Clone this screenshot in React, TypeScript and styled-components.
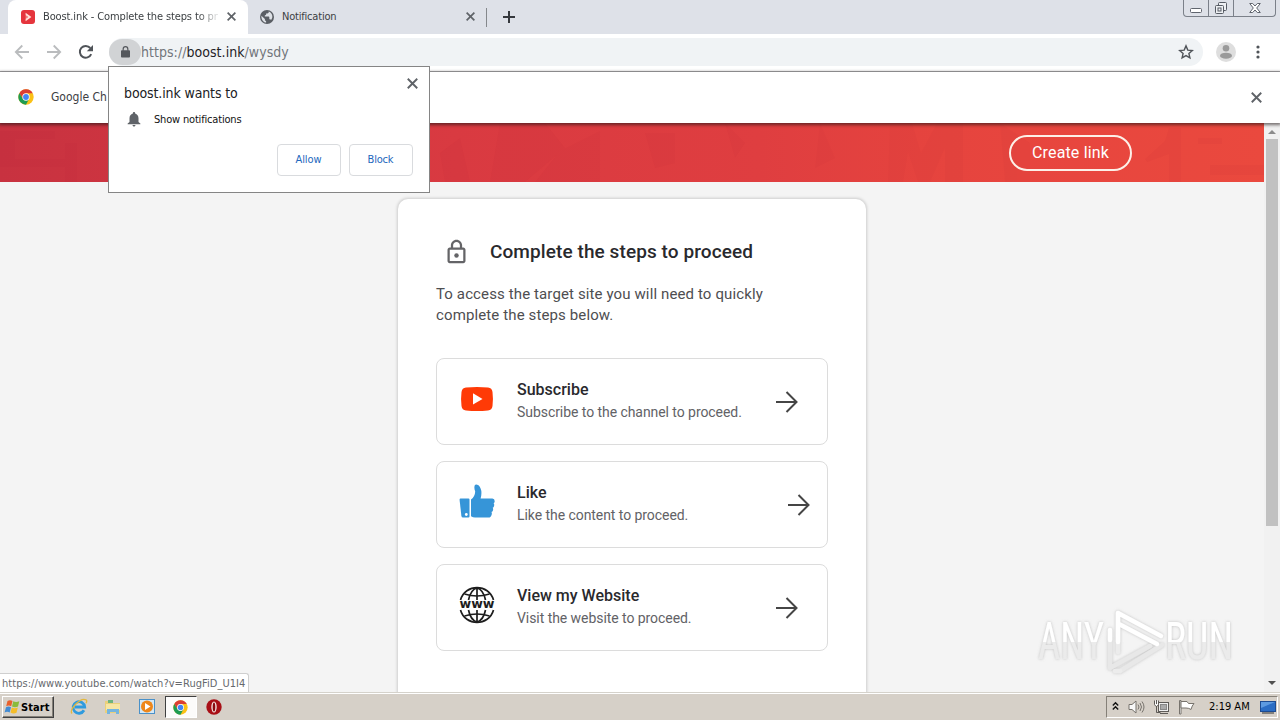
import styled, { createGlobalStyle } from "styled-components";

// fonts
const UI_FONT = `"DejaVu Sans Condensed", "DejaVu Sans", Tahoma, sans-serif`;
const PAGE_FONT = `Roboto, "Liberation Sans", sans-serif`;

type Step = {
  icon: "youtube" | "like" | "www";
  title: string;
  text: string;
  arrowGap: number;
};

const STEPS: Step[] = [
  { icon: "youtube", title: "Subscribe", text: "Subscribe to the channel to proceed.", arrowGap: 28 },
  { icon: "like", title: "Like", text: "Like the content to proceed.", arrowGap: 16 },
  { icon: "www", title: "View my Website", text: "Visit the website to proceed.", arrowGap: 28 },
];

const GlobalStyle = createGlobalStyle`
  * {
    box-sizing: border-box;
  }

  body {
    margin: 0;
    overflow: hidden;
  }

  h1, h2, p {
    margin: 0;
  }

  svg {
    display: block;
    flex: none;
  }

  button {
    padding: 0;
    border: 0;
    background: none;
    font: inherit;
  }
`;

// BROWSER
const Screen = styled.div`
  position: relative;
  display: flex;
  flex-direction: column;
  width: 1280px;
  height: 720px;
  overflow: hidden;
  background: #fff;
  font-family: ${UI_FONT};
  font-stretch: condensed;
`;

const Label = styled.span<{ $size?: number; $color?: string; $spacing?: number }>`
  font-size: ${(p) => p.$size ?? 11}px;
  color: ${(p) => p.$color ?? "#3c4043"};
  letter-spacing: ${(p) => p.$spacing ?? 0}px;
  line-height: 16px;
  white-space: nowrap;
`;

const TabStrip = styled.div`
  display: flex;
  height: 34px;
  padding-left: 8px;
  background: #dee1e8;
`;

const Tab = styled.div<{ $active?: boolean }>`
  display: flex;
  align-items: center;
  width: ${(p) => (p.$active ? 240 : 239)}px;
  height: 34px;
  padding: 0 12px 1px ${(p) => (p.$active ? 13 : 12)}px;
  gap: 8px;
  border-radius: 8px 8px 0 0;
  background: ${(p) => (p.$active ? "#fff" : "transparent")};
`;

const TabTitle = styled(Label)<{ $fade?: boolean }>`
  flex: 1;
  padding-top: 1px;
  ${(p) => p.$fade && "mask-image: linear-gradient(90deg, #000 88%, rgba(0, 0, 0, 0.2) 98%);"}
`;

const TabDivider = styled.div`
  width: 1px;
  height: 19px;
  margin: 8px 16px 0 -1px;
  background: #85888c;
`;

const NewTab = styled.div`
  display: flex;
  align-items: center;
  height: 34px;
`;

const WindowControls = styled.div`
  display: flex;
  height: 17px;
  margin: 0 4px 0 auto;
  border: 1px solid #7b8089;
  border-top: 0;
  border-radius: 0 0 4px 4px;
`;

const WindowButton = styled.div<{ $width: number }>`
  display: flex;
  align-items: center;
  justify-content: center;
  width: ${(p) => p.$width}px;

  & + & {
    border-left: 1px solid #7b8089;
  }
`;

const Toolbar = styled.div`
  display: flex;
  align-items: center;
  height: 38px;
  padding: 0 14px 1px;
  border-bottom: 1px solid #acaeb0;
  background: #fff;
`;

const NavButtons = styled.div`
  display: flex;
  gap: 16px;
  margin-right: 15px;
`;

const Omnibox = styled.div`
  display: flex;
  align-items: center;
  width: 1094px;
  height: 28px;
  padding-right: 9px;
  border-radius: 14px;
  background: #f0f3f5;
`;

const SiteChip = styled.div`
  display: flex;
  align-items: center;
  justify-content: center;
  width: 32px;
  height: 26px;
  padding-left: 1px;
  border-radius: 13px;
  background: #d1d3d5;
`;

const Url = styled(Label)`
  flex: 1;
  line-height: 20px;

  b {
    font-weight: 400;
    color: #1f2226;
  }
`;

const ToolbarEnd = styled.div`
  display: flex;
  align-items: center;
  gap: 20px;
  margin-left: 13px;
`;

const Infobar = styled.div`
  position: relative;
  z-index: 1;
  display: flex;
  align-items: center;
  height: 51px;
  padding: 0 18px 1px 18px;
  gap: 17px;
  background: #fff;
  box-shadow: 0 1px 3px 1px rgba(30, 20, 20, 0.6);
`;

const InfobarClose = styled.div`
  margin-left: auto;
`;

// PERMISSION POPUP
const Popup = styled.div`
  position: absolute;
  z-index: 3;
  left: 108px;
  top: 66px;
  width: 322px;
  height: 127px;
  padding: 18px 16px 16px 15px;
  display: flex;
  flex-direction: column;
  border: 1px solid #858585;
  background: #fff;
`;

const PopupHead = styled.div`
  display: flex;
  justify-content: space-between;
  height: 25px;
`;

const PopupClose = styled.div`
  margin: -7px -5px 0 0;
`;

const PopupRow = styled.div`
  display: flex;
  align-items: center;
  gap: 11px;
  height: 19px;
  padding-left: 1px;

  svg {
    margin-top: -2px;
  }
`;

const PopupActions = styled.div`
  display: flex;
  justify-content: flex-end;
  gap: 8px;
  margin-top: auto;
`;

const PopupButton = styled.button`
  display: flex;
  align-items: center;
  justify-content: center;
  width: 64px;
  height: 32px;
  padding: 0 1px 0 0;
  border: 1px solid #d9dbde;
  border-radius: 4px;
  background: #fff;
`;

// PAGE
const Viewport = styled.div`
  display: flex;
  height: 569px;
`;

const Page = styled.div`
  flex: 1;
  overflow: hidden;
  background: #f4f4f4;
  font-family: ${PAGE_FONT};
  font-stretch: normal;
`;

const Banner = styled.header`
  position: relative;
  display: flex;
  justify-content: flex-end;
  height: 59px;
  padding: 12px 132px 0 0;
  background: linear-gradient(90deg, #c83240 0%, #d93a41 36%, #df3e40 60%, #e6443e 75%, #ea493e 100%);
`;

const BannerArt = styled.svg`
  position: absolute;
  left: 0;
  top: 0;
`;

const CreateLink = styled.button`
  position: relative;
  width: 123px;
  height: 36px;
  border: 2px solid #fdf0e8;
  border-radius: 18px;
  color: #fff;
  font-size: 16px;
  font-weight: 400;
  letter-spacing: 0.15px;
  line-height: 30px;
`;

const Card = styled.main`
  width: 468px;
  height: 540px;
  margin: 17px auto 0;
  padding: 38px 38px 0;
  border-radius: 10px;
  background: #fff;
  box-shadow: 0 0 3px 1px rgba(0, 0, 0, 0.16);
`;

const CardHead = styled.div`
  display: flex;
  align-items: center;
  gap: 20px;
  height: 30px;
  padding-left: 7px;
`;

const CardTitle = styled.h1`
  font-size: 19px;
  font-weight: 500;
  line-height: 30px;
  color: #29292d;
  letter-spacing: 0.09px;
  white-space: nowrap;
`;

const Intro = styled.p`
  margin-top: 17px;
  font-size: 15px;
  line-height: 21px;
  color: #4e4e51;
  letter-spacing: 0.12px;
  white-space: nowrap;
`;

const StepList = styled.div`
  display: flex;
  flex-direction: column;
  gap: 16px;
  margin-top: 32px;
`;

const StepCard = styled.div<{ $arrowGap: number }>`
  display: flex;
  height: 87px;
  padding: 20px ${(p) => p.$arrowGap}px 0 22px;
  border: 1px solid #dcdcdc;
  border-radius: 8px;
`;

const StepText = styled.div`
  flex: 1;
  margin-left: 22px;
`;

const StepTitle = styled.h2`
  font-size: 16px;
  font-weight: 500;
  line-height: 22px;
  color: #29292d;
`;

const StepDescription = styled.p`
  font-size: 14px;
  line-height: 22px;
  color: #626266;
  letter-spacing: -0.06px;
  white-space: nowrap;
`;

const StepArrow = styled.div`
  margin-top: 11px;
`;

const Scrollbar = styled.div`
  display: flex;
  flex-direction: column;
  align-items: center;
  width: 16px;
  background: #f1f1f1;
`;

const ScrollThumb = styled.div`
  width: 12px;
  height: 387px;
  margin: 5px 0 auto;
  background: #c1c1c1;
`;

const ScrollArrow = styled.div<{ $down?: boolean; $color: string }>`
  width: 0;
  margin: ${(p) => (p.$down ? "0 0 7px" : "7px 0 0")};
  border: 4px solid transparent;
  border-${(p) => (p.$down ? "top" : "bottom")}-color: ${(p) => p.$color};
  border-${(p) => (p.$down ? "bottom" : "top")}-width: 0;
`;

const StatusBubble = styled.div`
  position: absolute;
  left: 0;
  top: 673px;
  display: flex;
  align-items: center;
  width: 249px;
  height: 19px;
  padding: 2px 0 0 2px;
  border: solid #cfcfcf;
  border-width: 1px 1px 0 0;
  border-radius: 0 3px 0 0;
  background: #fff;
`;

const Watermark = styled.svg`
  position: absolute;
  left: 1030px;
  top: 600px;
`;

// TASKBAR
const Taskbar = styled.div`
  display: flex;
  align-items: center;
  height: 28px;
  padding: 1px 0 0 2px;
  border-top: 1px solid #d5d2cb;
  background: #d6d0c8;
  box-shadow: inset 0 1px #fff;
`;

const StartButton = styled.div`
  display: flex;
  align-items: center;
  width: 52px;
  height: 22px;
  padding-left: 1px;
  border: 1px solid;
  border-color: #fff #404040 #404040 #fff;
  box-shadow: inset -1px -1px #858078;

  b {
    font-size: 11px;
    letter-spacing: 0.1px;
    color: #000;
  }
`;

const QuickLaunch = styled.div`
  display: flex;
  align-items: center;
  gap: 16px;
  margin: 0 9px 0 16px;
`;

const ActiveTask = styled.div`
  display: flex;
  align-items: center;
  justify-content: center;
  width: 32px;
  height: 22px;
  margin-right: 9px;
  padding-right: 1px;
  border: 1px solid;
  border-color: #404040 #fff #fff #404040;
  background: #fcfbfa;
`;

const Tray = styled.div`
  display: flex;
  align-items: center;
  width: 172px;
  height: 22px;
  margin: 0 2px 0 auto;
  padding-left: 4px;
  border: 1px solid;
  border-color: #858078 #fff #fff #858078;
`;

const TrayIcons = styled.div`
  display: flex;
  align-items: center;
  gap: 8px;
  margin-right: 14px;
`;

const DesktopIcon = styled.svg`
  margin-left: 10px;
`;

// ICONS
function CloseIcon({ size = 9, color = "#5f6368", width = 1.9 }) {
  return (
    <svg width={size} height={size} viewBox="0 0 10 10" stroke={color} strokeWidth={width}>
      <path d="M.7.7l8.6 8.6M9.3.7L.7 9.3" />
    </svg>
  );
}

function ChromeLogo({ size }: { size: number }) {
  return (
    <svg width={size} height={size} viewBox="0 0 48 48">
      <circle cx="24" cy="24" r="23" fill="#fbc116" />
      <path d="M24 13h20.2A23 23 0 0 0 4.1 12.5L14.5 29.5z" fill="#db3e34" />
      <path d="M4.1 12.5A23 23 0 0 0 23.9 47L33.5 29.5 24 34 14.5 29.5z" fill="#1e9c52" />
      <circle cx="24" cy="24" r="11" fill="#fff" />
      <circle cx="24" cy="24" r="8.7" fill="#4285f4" />
    </svg>
  );
}

function BoostIcon() {
  return (
    <svg width="14" height="14" viewBox="0 0 14 14">
      <rect width="14" height="14" rx="3" fill="#e5353d" />
      <path d="M4.6 2.8L10.4 7l-5.8 4.2V8.700L7 7 4.600 5.300z" fill="#ffe0da" />
      <path d="M4.6 5.3L7 7 4.6 8.7z" fill="#f4837f" />
    </svg>
  );
}

function GlobeIcon() {
  return (
    <svg width="14" height="14" viewBox="0 0 14 14">
      <circle cx="7" cy="7" r="7" fill="#5a5e64" />
      <path d="M1.4 5.7l3.5 3.4v1.2l1.2 1v1.3C3.2 12.2 1.2 9.7 1.4 5.7zM8.7 1.6v.7c0 .7-.6 1.2-1.3 1.2H6.1v1.3l-1.3.6v1.2h3.8c.4 0 .7.3.7.7v1.9h.6c.6 0 1 .4 1.2.9 2.5-2.9 1.2-7.2-2.4-8.5z" fill="#dee1e6" />
    </svg>
  );
}

function NavArrow({ flip = false }) {
  return (
    <svg width="16" height="16" viewBox="0 0 16 16" fill="none" stroke="#babcbe" strokeWidth="1.8" transform={flip ? "scale(-1 1)" : undefined}>
      <path d="M15 8H2M8.3 1.5L1.8 8l6.5 6.5" />
    </svg>
  );
}

function ReloadIcon() {
  return (
    <svg width="16" height="16" viewBox="0 0 16 16">
      <path d="M13.2 10.1A5.9 5.9 0 1 1 12.3 4" fill="none" stroke="#505459" strokeWidth="2" />
      <path d="M15 1v6.2H8.8z" fill="#505459" />
    </svg>
  );
}

function LockSolid() {
  return (
    <svg width="9" height="12" viewBox="0 0 10 13">
      <rect y="4.5" width="10" height="8" rx="1" fill="#54575c" />
      <path d="M2.4 5V3.2a2.6 2.6 0 0 1 5.2 0V5" fill="none" stroke="#54575c" strokeWidth="1.3" />
    </svg>
  );
}

function LockOutline() {
  return (
    <svg width="27" height="28" viewBox="0 0 24 24" fill="#646467">
      <path d="M18 8h-1V6c0-2.760-2.240-5-5-5S7 3.240 7 6v2H6c-1.100 0-2 .9-2 2v10c0 1.100.9 2 2 2h12c1.100 0 2-.9 2-2V10c0-1.100-.9-2-2-2zM9 6c0-1.660 1.340-3 3-3s3 1.340 3 3v2H9V6zm9 14H6V10h12v10z" />
      <circle cx="12" cy="15" r="2" />
    </svg>
  );
}

function StarIcon() {
  return (
    <svg width="16" height="16" viewBox="0 0 16 16" fill="none" stroke="#505459" strokeWidth="1.4">
      <path d="M8 1.9l1.8 4.2 4.5.4-3.4 3 1 4.4L8 11.600l-3.900 2.300 1-4.400-3.400-3 4.500-.4z" />
    </svg>
  );
}

function Avatar() {
  return (
    <svg width="20" height="20" viewBox="0 0 20 20">
      <circle cx="10" cy="10" r="10" fill="#dedede" />
      <circle cx="10" cy="6.3" r="3.3" fill="#9a9a9a" />
      <ellipse cx="10" cy="13.7" rx="6" ry="3" fill="#9a9a9a" />
    </svg>
  );
}

function BellIcon() {
  return (
    <svg width="18" height="18" viewBox="0 0 24 24" fill="#5f6368">
      <path d="M12 22c1.100 0 2-.9 2-2h-4c0 1.100.9 2 2 2zm6-6v-5c0-3.070-1.630-5.640-4.500-6.320V4c0-.83-.67-1.500-1.500-1.500s-1.500.67-1.500 1.500v.68C7.640 5.360 6 7.920 6 11v5l-2.500 2v1h17v-1z" />
    </svg>
  );
}

function ArrowIcon() {
  return (
    <svg width="24" height="24" viewBox="0 0 24 24" fill="none" stroke="#454545" strokeWidth="2">
      <path d="M1 12h20.500M11.500 2l10 10-10 10" />
    </svg>
  );
}

function StepIcon({ name }: { name: Step["icon"] }) {
  if (name === "youtube") {
    return (
      <svg width="36" height="40" viewBox="0 0 36 40">
        <path d="M7 8.500q11-1 22 0 4 .4 4.500 4.500.9 7 0 14-.5 4.100-4.500 4.500-11 1-22 0-4-.4-4.500-4.500-.9-7 0-14Q3 8.900 7 8.500z" fill="#ff3a06" />
        <path d="M14 14.300v11.200l9.500-5.600z" fill="#fff" />
      </svg>
    );
  }

  if (name === "like") {
    return (
      <svg width="36" height="40" viewBox="0 1.5 36 40" fill="#3695d8">
        <path d="M1.500 18h8q1 0 1 1v17q0 1-1 1H4q-1.400 0-1.600-1.500L.6 19.500Q.5 18 1.500 18z" />
        <path d="M12 19q4-3 4.200-8-1.500-4-.3-6.500 1.200-1.200 3.600.3 4.500 4.500 2.100 13.200h11.800q2.300.2 2.300 2.700 0 1.500-1.100 2 1 1 .4 3-.3 1.200-1.300 1.500.8 1.300.2 2.900-.3 1.200-1.400 1.500.6 1 .2 2.300-.6 3.100-3.200 3.100H16q-2 0-4-1.300z" />
        <circle cx="7.300" cy="34" r="1.400" fill="#fff" />
      </svg>
    );
  }

  return (
    <svg width="36" height="40" viewBox="0 0 36 40">
      <g fill="none" stroke="#1d1d1d" strokeWidth="1.7">
        <path d="M1.500 15C6-1.500 30-1.500 34.500 15M1.500 25c4.500 16.500 28.500 16.500 33 0" />
        <path d="M9.500 15Q11.500 5 18 2.800 24.500 5 26.500 15M9.500 25q2 10 8.500 12.200Q24.500 35 26.500 25M18 2.800V15M18 25v12.200" />
        <path d="M5.500 9q12.500 4 25 0M5.500 31q12.500-4 25 0" />
      </g>
      <text x="0.5" y="23.200" fontSize="11.5" fontFamily="DejaVu Sans" fontWeight="700" fill="#1d1d1d" textLength="35" lengthAdjust="spacingAndGlyphs">
        www
      </text>
    </svg>
  );
}

function BannerShapes() {
  return (
    <BannerArt width="1264" height="59" viewBox="0 0 1264 59">
      <g fill="#a51d2b" opacity="0.045">
        <path d="M440 30l20-15 10 44h-25zM500 0h45l20 25-40 34h-35zM560 28l40-20v51h-65zM645 10h30v30l-20 5zM725 0l20 20-10 15zM820 0l15 35-20 10z" />
        <path d="M890 0h22l9 30 16-30h26v59h-18V25l-15 34h-12l-10-30-5 30h-15zM1000 0l30 20v39h-25zM1145 36l20-18 4-13h12v54h-12V31l-22 8zM1198 15h24v6h-24zM1210 42h54v10h-54z" />
        <path d="M0 8h55v8H15v20h50v8H0zM65 20h12v39H65z" />
      </g>
    </BannerArt>
  );
}

function AnyRunLogo() {
  return (
    <Watermark width="245" height="82" viewBox="0 0 245 82">
      <defs>
        <linearGradient id="shine" x1="0" y1="0" x2="0" y2="1">
          <stop offset="0.5" stopColor="#fff" />
          <stop offset="0.5" stopColor="#ebebeb" />
        </linearGradient>
        <filter id="glow" x="-10%" y="-10%" width="120%" height="120%">
          <feDropShadow dx="0" dy="0" stdDeviation="1.6" floodColor="#888" floodOpacity="0.5" />
        </filter>
      </defs>
      <g filter="url(#glow)">
        <g fill="url(#shine)" fontFamily="Roboto" fontSize="52" fontWeight="400">
          <text x="8" y="59" textLength="66" lengthAdjust="spacingAndGlyphs">ANY</text>
          <text x="135" y="59" textLength="68" lengthAdjust="spacingAndGlyphs">RUN</text>
        </g>
        <g fill="none" strokeWidth="4.5" strokeLinecap="round" strokeLinejoin="round">
          <path d="M80 38V68l40-22M90 71l42-26" stroke="#e8e8e8" />
          <path d="M85 71h5M88 52V13" stroke="#ececec" />
          <path d="M80 40V30M88 42V13l43 23M89 24l38 20" stroke="#fff" />
        </g>
      </g>
    </Watermark>
  );
}

function WindowsFlag() {
  return (
    <svg width="17" height="16" viewBox="0 0 17 16">
      <path d="M3.500 2Q6 .5 8.500 2L7.200 7.200Q4.700 6 2.200 7.300z" fill="#e8602c" />
      <path d="M9.300 2.300q2.700 1.600 6 0L14 7.600q-3 1.500-6 0z" fill="#8abb3b" />
      <path d="M2 8.200q2.500-1.300 5 0l-1.300 5.300Q3.200 12.200.6 13.500z" fill="#428bd3" />
      <path d="M7.800 8.500q3 1.500 6 0l-1.300 5.300q-3 1.500-6-.2z" fill="#f5bd29" />
    </svg>
  );
}

function QuickIcons() {
  return (
    <QuickLaunch>
      <svg width="18" height="18" viewBox="0 0 18 18" fill="none">
        <path d="M14 12.300A5.800 5.800 0 1 1 14.700 9H5" stroke="#2f9bde" strokeWidth="2.8" />
        <path d="M2 15.500C-1 12 10-1 16 1.800q1.500.9 0 3.500" stroke="#e3b83e" strokeWidth="1.3" />
      </svg>
      <svg width="18" height="18" viewBox="0 0 18 18">
        <path d="M1 3h6l1 2h8v10H1z" fill="#ead07a" />
        <path d="M4 2h5v3H4z" fill="#6db47c" />
        <path d="M2 6h14v6H2z" fill="#f6e6a4" />
        <path d="M3 16v-5h12v5h-3v-2H6v2z" fill="#75b5df" />
      </svg>
      <svg width="18" height="18" viewBox="0 0 18 18">
        <rect x="1.5" y="1.5" width="15" height="14" fill="#d4e8f6" stroke="#4a91c9" />
        <circle cx="9" cy="8.5" r="6" fill="#ee871b" />
        <path d="M7 5v7l5.500-3.500z" fill="#fff" />
      </svg>
    </QuickLaunch>
  );
}

function TrayGlyphs() {
  return (
    <TrayIcons>
      <svg width="9" height="12" viewBox="0 0 9 12" fill="none" stroke="#111" strokeWidth="1.4">
        <path d="M1.800 4.500l2.700-2.700 2.700 2.700M1.800 8.500l2.700-2.700 2.700 2.700" />
      </svg>
      <svg width="17" height="16" viewBox="0 0 17 16" fill="none" stroke="#77736d">
        <path d="M1 5.500h3L8 2v12l-4-3.500H1z" fill="#f8f8f8" />
        <path d="M10 5.500q2 2.500 0 5M12 4q3 4 0 8M14 2.500q4 5.500 0 11" />
      </svg>
      <svg width="17" height="16" viewBox="0 0 17 16" stroke="#5e5b57">
        <rect x="5.5" y="3.5" width="10" height="9" fill="#eee" />
        <rect x="7.5" y="5.5" width="6" height="5" fill="#aaa" stroke="#888" />
        <path d="M7 14.500h8M3.500 8v5.500h4" fill="none" />
        <path d="M1.500 1.500v4L3 7.500h1l1.500-2v-4M3.500 1v4" fill="#f8f8f8" />
      </svg>
      <svg width="17" height="16" viewBox="0 0 17 16" fill="#fff" stroke="#77736d">
        <path d="M1.500 1.500h1.500V15H1.500z" />
        <path d="M3 2.500h6l1.500 2H16q-2 2-3 6-2-1.500-5-1.500H3z" />
      </svg>
    </TrayIcons>
  );
}

export default function App() {
  return (
    <>
      <GlobalStyle />

      <Screen>
        <TabStrip>
          <Tab $active>
            <BoostIcon />
            <TabTitle $fade $spacing={-0.12}>Boost.ink - Complete the steps to pr</TabTitle>
            <CloseIcon />
          </Tab>
          <Tab>
            <GlobeIcon />
            <TabTitle $spacing={-0.2}>Notification</TabTitle>
            <CloseIcon />
          </Tab>
          <TabDivider />
          <NewTab>
            <svg width="12" height="12" viewBox="0 0 12 12" stroke="#35383d" strokeWidth="2">
              <path d="M6 0v12M0 6h12" />
            </svg>
          </NewTab>
          <WindowControls>
            <WindowButton $width={24}>
              <svg width="12" height="17" viewBox="0 0 12 17" fill="#fff" stroke="#60656e">
                <rect x=".5" y="8.5" width="11" height="4" rx="1" />
              </svg>
            </WindowButton>
            <WindowButton $width={25}>
              <svg width="14" height="16" viewBox="0 0 14 16" fill="#eef0f3" stroke="#565b64">
                <rect x="4.5" y="2.5" width="8" height="8" rx="1" />
                <rect x="1.5" y="5.5" width="8" height="8" rx="1" />
                <rect x="4" y="8" width="3" height="3" />
              </svg>
            </WindowButton>
            <WindowButton $width={42}>
              <svg width="12" height="12" viewBox="0 0 12 12" fill="#fff" stroke="#60656e">
                <path d="M.7 1.500h3L6 4l2.300-2.500h3L7.700 6l3.600 4.500h-3L6 8l-2.300 2.500h-3L4.300 6z" />
              </svg>
            </WindowButton>
          </WindowControls>
        </TabStrip>

        <Toolbar>
          <NavButtons>
            <NavArrow />
            <NavArrow flip />
            <ReloadIcon />
          </NavButtons>
          <Omnibox>
            <SiteChip>
              <LockSolid />
            </SiteChip>
            <Url $size={14} $color="#72767b" $spacing={0.04}>
              https://<b>boost.ink</b>/wysdy
            </Url>
            <StarIcon />
          </Omnibox>
          <ToolbarEnd>
            <Avatar />
            <svg width="4" height="14" viewBox="0 0 4 14" fill="#505459">
              <circle cx="2" cy="2" r="1.6" />
              <circle cx="2" cy="7" r="1.6" />
              <circle cx="2" cy="12" r="1.6" />
            </svg>
          </ToolbarEnd>
        </Toolbar>

        <Infobar>
          <ChromeLogo size={16} />
          <Label $size={12}>Google Ch</Label>
          <InfobarClose>
            <CloseIcon size={11} width={1.7} />
          </InfobarClose>
        </Infobar>

        <Viewport>
          <Page>
            <Banner>
              <BannerShapes />
              <CreateLink>Create link</CreateLink>
            </Banner>

            <Card>
              <CardHead>
                <LockOutline />
                <CardTitle>Complete the steps to proceed</CardTitle>
              </CardHead>
              <Intro>
                To access the target site you will need to quickly
                <br />
                complete the steps below.
              </Intro>

              <StepList>
                {STEPS.map((step) => (
                  <StepCard key={step.title} $arrowGap={step.arrowGap}>
                    <StepIcon name={step.icon} />
                    <StepText>
                      <StepTitle>{step.title}</StepTitle>
                      <StepDescription>{step.text}</StepDescription>
                    </StepText>
                    <StepArrow>
                      <ArrowIcon />
                    </StepArrow>
                  </StepCard>
                ))}
              </StepList>
            </Card>
          </Page>

          <Scrollbar>
            <ScrollArrow $color="#8c8c8c" />
            <ScrollThumb />
            <ScrollArrow $down $color="#505050" />
          </Scrollbar>
        </Viewport>

        <Taskbar>
          <StartButton>
            <WindowsFlag />
            <b>Start</b>
          </StartButton>
          <QuickIcons />
          <ActiveTask>
            <ChromeLogo size={15} />
          </ActiveTask>
          <svg width="16" height="16" viewBox="0 0 16 16">
            <circle cx="8" cy="8" r="7.7" fill="#a80f16" />
            <ellipse cx="8" cy="8" rx="2.7" ry="5.5" fill="#f4e5e2" />
            <ellipse cx="8" cy="8" rx="1.3" ry="4.5" fill="#8a0a10" />
          </svg>
          <Tray>
            <TrayGlyphs />
            <Label $color="#000">2:19 AM</Label>
            <DesktopIcon width="16" height="14" viewBox="0 0 16 14">
              <rect x=".5" y="1.5" width="15" height="10" fill="#2b6dc4" stroke="#1d4b91" />
              <path d="M1 2h14L1 8z" fill="#5d9ae0" />
              <path d="M2 13h12" stroke="#333" />
            </DesktopIcon>
          </Tray>
        </Taskbar>

        <Popup>
          <PopupHead>
            <Label $size={14} $color="#202124" $spacing={-0.12}>boost.ink wants to</Label>
            <PopupClose>
              <CloseIcon size={11} width={1.7} />
            </PopupClose>
          </PopupHead>
          <PopupRow>
            <BellIcon />
            <Label $color="#111" $spacing={-0.18}>Show notifications</Label>
          </PopupRow>
          <PopupActions>
            <PopupButton>
              <Label $color="#2268bd" $spacing={-0.1}>Allow</Label>
            </PopupButton>
            <PopupButton>
              <Label $color="#2268bd" $spacing={-0.2}>Block</Label>
            </PopupButton>
          </PopupActions>
        </Popup>

        <StatusBubble>
          <Label $color="#66696d" $spacing={0.05}>https://www.youtube.com/watch?v=RugFiD_U1I4</Label>
        </StatusBubble>

        <AnyRunLogo />
      </Screen>
    </>
  );
}
